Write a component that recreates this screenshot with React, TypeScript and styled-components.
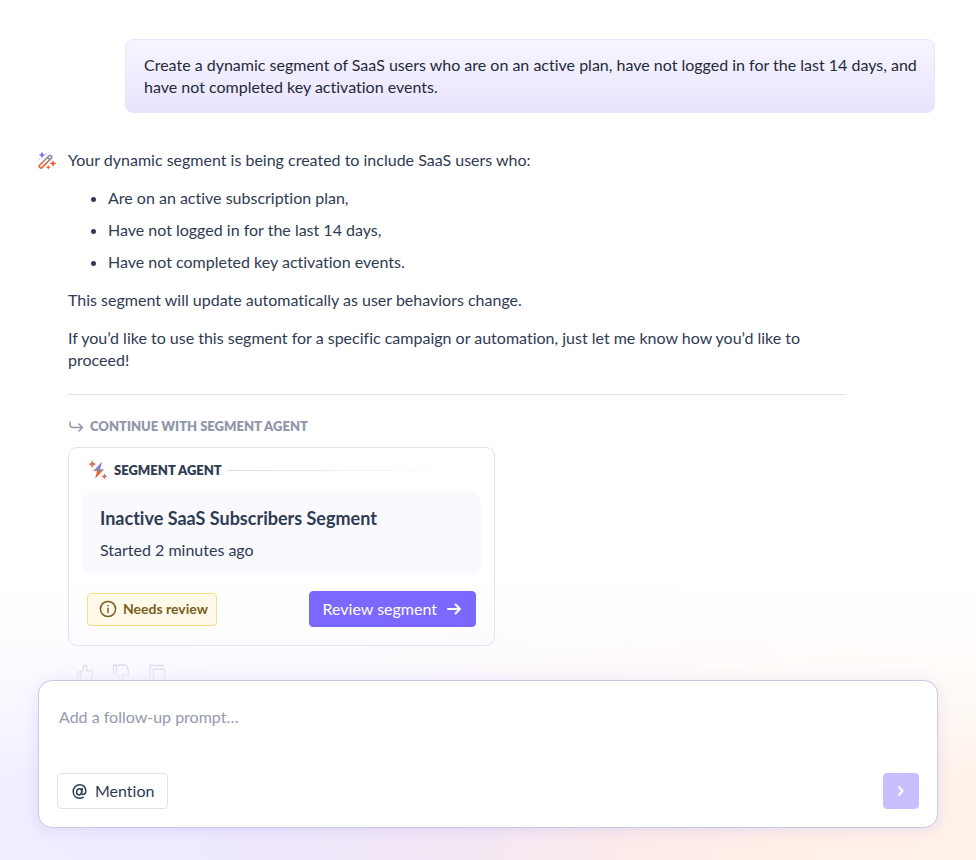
import React from "react";
import styled, { createGlobalStyle } from "styled-components";

const GlobalStyle = createGlobalStyle`
  * { box-sizing: border-box; }
  body { margin: 0; background: #fff; }
  body, button, textarea { font-family: Lato, "Liberation Sans", sans-serif; font-variant-ligatures: none; }
  p, h2, h3, ul { margin: 0; }
`;

const Page = styled.main`
  min-height: 100vh;
  padding: 39px 38px 32px;
  display: flex;
  flex-direction: column;
  color: #2f3b52;
  font-size: 16px;
  line-height: 22px;
  background:
    linear-gradient(to bottom, #fff 0, #fff 580px, rgba(255, 255, 255, 0.85) 640px, rgba(255, 255, 255, 0.6) 700px, rgba(255, 255, 255, 0) 780px),
    linear-gradient(to right, #f1eeff 0%, #efe9fe 24%, #f4e8f5 48%, #fbebe9 64%, #fff1e7 86%, #fff2e9 100%);
`;

const UserPrompt = styled.p`
  margin: 0 3px 36px 87px;
  padding: 14px 12px 14px 18px;
  border: 1px solid #e9e5fb;
  border-radius: 8px;
  background: linear-gradient(to bottom, #f7f5ff, #e9e4fd);
  color: #1f2a3a;
`;

const Answer = styled.article`
  display: grid;
  grid-template-columns: 18px minmax(0, 1fr);
  column-gap: 12px;
  margin-right: 92px;
`;

const AnswerIcon = styled.svg`
  width: 18px;
  height: 18px;
  margin-top: 3px;
`;

const AnswerBody = styled.div`
  display: flex;
  flex-direction: column;
  min-width: 0;
`;

const Message = styled.section`
  display: flex;
  flex-direction: column;
  gap: 16px;
  padding-bottom: 23px;
  border-bottom: 1px solid #e1e3e9;
`;

const Bullets = styled.ul`
  display: flex;
  flex-direction: column;
  gap: 10px;
  padding-left: 40px;
`;

const NextStep = styled.h2`
  display: flex;
  align-items: center;
  gap: 6px;
  padding-top: 20px;
  color: #9197a9;
  font-size: 13px;
  line-height: 22px;
  font-weight: 800;
`;

const AgentCard = styled.section`
  width: 100%;
  max-width: 427px;
  margin-top: 10px;
  padding: 11px 13px 18px;
  border: 1px solid #e4e4ef;
  border-radius: 9px;
`;

const AgentHeader = styled.h3`
  display: flex;
  align-items: center;
  gap: 6px;
  padding: 0 30px 0 6px;
  font-size: 13px;
  line-height: 22px;
  font-weight: 800;

  &::after {
    content: "";
    flex: 1;
    height: 1px;
    background: linear-gradient(to right, #dcdde8, rgba(220, 221, 232, 0));
  }
`;

const SegmentPanel = styled.div`
  display: flex;
  flex-direction: column;
  gap: 9px;
  margin-top: 11px;
  padding: 15px 18px 14px;
  border-radius: 10px;
  background: #f9f9fe;
`;

const SegmentTitle = styled.p`
  font-size: 18px;
  line-height: 23px;
  font-weight: 700;
`;

const CardFooter = styled.div`
  display: flex;
  align-items: center;
  justify-content: space-between;
  padding: 16px 5px 0;
`;

const Status = styled.span`
  display: flex;
  align-items: center;
  gap: 6px;
  height: 33px;
  padding: 0 8px 0 11px;
  border: 1px solid #f6dc85;
  border-radius: 4px;
  background: #fff9ea;
  color: #78601b;
  font-size: 14px;
  font-weight: 700;
`;

const Button = styled.button<{ $tone: "primary" | "outline" | "soft" }>`
  display: flex;
  align-items: center;
  justify-content: center;
  gap: ${({ $tone }) => ($tone === "primary" ? 9 : 7)}px;
  height: 36px;
  padding: ${({ $tone }) => ($tone === "soft" ? "0 9px" : "0 13px")};
  border: 1px solid ${({ $tone }) => ({ primary: "#7a68ff", outline: "#e0e1ec", soft: "#c9bfff" })[$tone]};
  border-radius: 4px;
  background: ${({ $tone }) => ({ primary: "#7a68ff", outline: "#fff", soft: "#c9bfff" })[$tone]};
  color: ${({ $tone }) => ($tone === "outline" ? "#2f3b52" : "#fff")};
  font-size: 16px;
  line-height: 22px;
  cursor: pointer;
`;

const Actions = styled.div`
  display: flex;
  gap: 16px;
  height: 34px;
  padding: 18px 8px 0;
  overflow: hidden;
  color: #dfdcec;
  mask-image: linear-gradient(to bottom, #000 60%, rgba(0, 0, 0, 0.3));
`;

const IconButton = styled.button`
  width: 20px;
  height: 20px;
  padding: 0;
  border: 0;
  background: none;
  color: inherit;
  cursor: pointer;

  svg { display: block; }
`;

const Composer = styled.form`
  display: flex;
  flex-direction: column;
  padding: 25px 18px 18px;
  border: 1px solid #c9cbe1;
  border-radius: 14px;
  background: #fff;
  box-shadow: 0 2px 16px rgba(122, 104, 255, 0.15);
`;

const PromptInput = styled.textarea`
  height: 67px;
  padding: 0 2px;
  border: 0;
  outline: 0;
  resize: none;
  background: transparent;
  color: #2f3b52;
  font-size: 16px;
  line-height: 22px;

  &::placeholder { color: #9499ab; opacity: 1; }
`;

const ComposerBar = styled.div`
  display: flex;
  align-items: center;
  justify-content: space-between;
`;

const Stroke = ({ size, width, children }: { size: number; width: number; children: React.ReactNode }) => (
  <svg width={size} height={size} viewBox={`0 0 ${size} ${size}`} fill="none" stroke="currentColor"
    strokeWidth={width} strokeLinecap="round" strokeLinejoin="round" aria-hidden="true">
    {children}
  </svg>
);

const WandIcon = () => (
  <AnswerIcon viewBox="0 0 18 18" fill="none" aria-hidden="true">
    <defs>
      <linearGradient id="wand" x1="9" y1="3" x2="9" y2="17" gradientUnits="userSpaceOnUse">
        <stop offset="0.35" stopColor="#858c9d" />
        <stop offset="0.7" stopColor="#ed6428" />
      </linearGradient>
    </defs>
    <path d="M1.6 13.3 11.1 3.8q.9-.9 1.8 0l.5.5q.9.9 0 1.8l-9.5 9.5q-.9.9-1.8 0l-.5-.5q-.9-.9 0-1.8ZM9.5 5.4l2.3 2.3" stroke="url(#wand)" strokeWidth="1.6" />
    <path d="m4-.4 1 2.4 2.4 1-2.4 1-1 2.4-1-2.4-2.4-1 2.4-1Z" fill="#7b6cf6" />
    <path d="m15 7.9 1.1 2.5 2.5 1.1-2.5 1.1-1.1 2.5-1.1-2.5-2.5-1.1 2.5-1.1Z" fill="#ed642f" />
    <path d="m10.3 12.9.8 1.5 1.5.8-1.5.8-.8 1.5-.8-1.5-1.5-.8 1.5-.8Z" fill="#ed6420" />
    <path d="M1.2 6.5v1M8.3 1.2v1" stroke="#a69bf5" strokeWidth="1" />
  </AnswerIcon>
);

const BoltIcon = () => (
  <svg width="20" height="20" viewBox="0 0 20 20" aria-hidden="true">
    <defs>
      <linearGradient id="bolt" x1="10" y1="2" x2="10" y2="19" gradientUnits="userSpaceOnUse">
        <stop offset="0.2" stopColor="#8372ff" />
        <stop offset="0.48" stopColor="#858da6" />
        <stop offset="0.58" stopColor="#f0602b" />
      </linearGradient>
    </defs>
    <path d="M14.2 1.8 5.2 11h3.9l-2 7.8 8.9-9.6h-4Z" fill="url(#bolt)" />
    <path d="m4.2.3 1.2 2.6 2.6 1.2-2.6 1.2-1.2 2.6-1.2-2.6-2.6-1.2 2.6-1.2Z" fill="#ed6b45" />
    <path d="m4.2.3 1.2 2.6 2.6 1.2-2.6 1.2Z" fill="#858da6" />
    <path d="m16.4 13.5.9 2.1 2.1.9-2.1.9-.9 2.1-.9-2.1-2.1-.9 2.1-.9Z" fill="#ed6b45" />
    <path d="m16.4 13.5.9 2.1 2.1.9h-3Z" fill="#858da6" />
  </svg>
);

const thumb = "M1.5 8h3v9h-3ZM4.5 8.5C7 7 7.5 4.5 7.8 2.3 8 .6 10.5.8 10.8 2.8c.2 1.3-.2 2.7-.6 3.9h4.5c1.5 0 2.3 1 2 2.3l-1.2 6c-.3 1.3-1 2-2.3 2H7.5l-3-1";

export default function App() {
  return (
    <>
      <GlobalStyle />
      <Page>
        <UserPrompt>
          Create a dynamic segment of SaaS users who are on an active plan, have not logged in for the
          last 14 days, and have not completed key activation events.
        </UserPrompt>
        <Answer>
          <WandIcon />
          <AnswerBody>
            <Message>
              <p>Your dynamic segment is being created to include SaaS users who:</p>
              <Bullets>
                <li>Are on an active subscription plan,</li>
                <li>Have not logged in for the last 14 days,</li>
                <li>Have not completed key activation events.</li>
              </Bullets>
              <p>This segment will update automatically as user behaviors change.</p>
              <p>
                If you’d like to use this segment for a specific campaign or automation, just let me know
                how you’d like to proceed!
              </p>
            </Message>
            <NextStep>
              <Stroke size={16} width={1.5}>
                <path d="M2 4v2.5A3 3 0 0 0 5 9.5h9.5M11 6l3.5 3.5L11 13" />
              </Stroke>
              CONTINUE WITH SEGMENT AGENT
            </NextStep>
            <AgentCard>
              <AgentHeader>
                <BoltIcon />
                SEGMENT AGENT
              </AgentHeader>
              <SegmentPanel>
                <SegmentTitle>Inactive SaaS Subscribers Segment</SegmentTitle>
                <p>Started 2 minutes ago</p>
              </SegmentPanel>
              <CardFooter>
                <Status>
                  <Stroke size={18} width={1.5}>
                    <circle cx="9" cy="9" r="7.6" />
                    <path d="M9 8.2v4.3M9 5.5v.2" />
                  </Stroke>
                  Needs review
                </Status>
                <Button type="button" $tone="primary">
                  Review segment
                  <Stroke size={16} width={2}>
                    <path d="M2 8h12M9.5 3.5 14 8l-4.5 4.5" />
                  </Stroke>
                </Button>
              </CardFooter>
            </AgentCard>
            <Actions>
              <IconButton type="button" aria-label="Good response">
                <Stroke size={20} width={1.4}><path d={thumb} /></Stroke>
              </IconButton>
              <IconButton type="button" aria-label="Bad response">
                <Stroke size={20} width={1.4}><path d={thumb} transform="matrix(1 0 0 -1 0 18)" /></Stroke>
              </IconButton>
              <IconButton type="button" aria-label="Copy response">
                <Stroke size={20} width={1.4}>
                  <path d="M2 14V1.5h13.5M5.5 5h11v12.5h-11Z" />
                </Stroke>
              </IconButton>
            </Actions>
          </AnswerBody>
        </Answer>
        <Composer onSubmit={(event) => event.preventDefault()}>
          <PromptInput aria-label="Follow-up prompt" placeholder="Add a follow-up prompt…" />
          <ComposerBar>
            <Button type="button" $tone="outline">
              <Stroke size={17} width={1.5}>
                <ellipse cx="8.2" cy="8.8" rx="2.5" ry="3.1" transform="rotate(15 8.2 8.8)" />
                <path d="M11.2 5.5 10.5 10c0 2.4 4.3 1.8 4.3-2C14.8 4 12.2 1.8 8.8 1.8A6.6 6.6 0 0 0 2.2 8.6c0 4 2.8 6.6 6.4 6.6q2.2 0 3.6-.9" />
              </Stroke>
              Mention
            </Button>
            <Button type="submit" $tone="soft" aria-label="Send prompt">
              <Stroke size={16} width={2}><path d="M6 4 9.5 8 6 12" /></Stroke>
            </Button>
          </ComposerBar>
        </Composer>
      </Page>
    </>
  );
}
